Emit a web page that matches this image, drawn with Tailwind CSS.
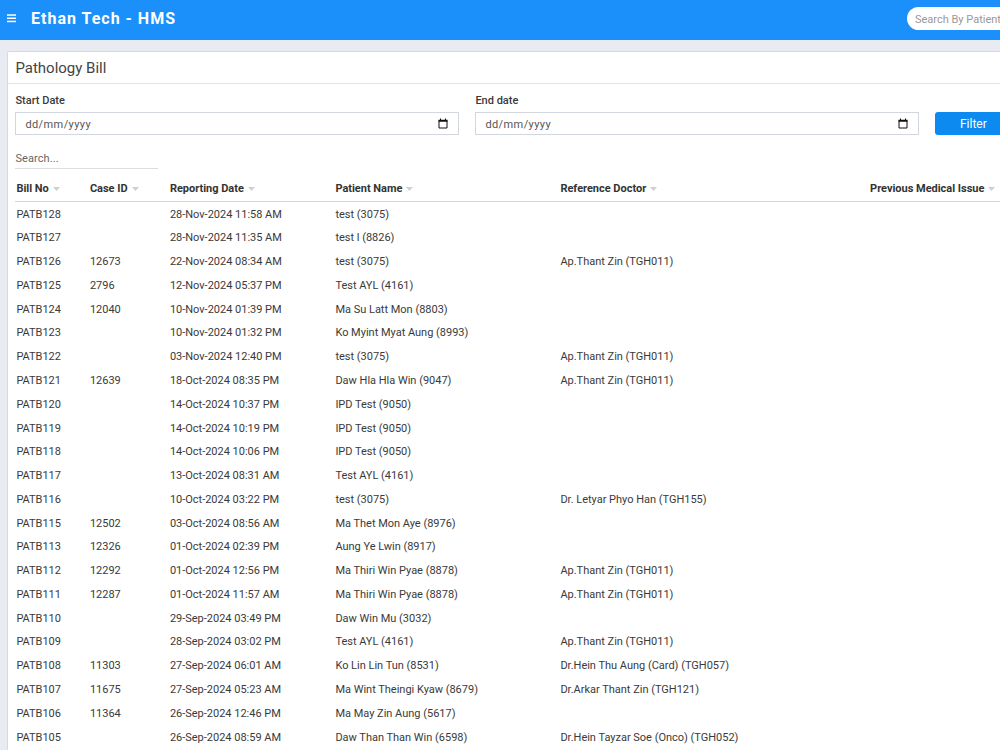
<!DOCTYPE html>
<html lang="en">
<head>
    <meta charset="UTF-8">
    <meta name="viewport" content="width=device-width, initial-scale=1.0">
    <title>Pathology Bill</title>
    <script src="https://cdn.jsdelivr.net/npm/@tailwindcss/browser@4"></script>
</head>
<body class="h-[750px] overflow-hidden bg-[#e8ebf1] font-['Roboto',sans-serif] text-[11px] leading-4 text-[#3a3a3a]">
    <header class="flex h-10 items-center justify-between bg-[#1b8ffa] pl-[7px] text-white">
        <div class="flex items-center gap-[15px] pb-[3px]">
            <svg class="h-[9px] w-[9px]" viewBox="0 0 9 9" fill="currentColor">
                <rect y="0.3" width="9" height="1.5" />
                <rect y="3.5" width="9" height="1.5" />
                <rect y="6.7" width="9" height="1.5" />
            </svg>
            <h1 class="text-[16px] font-bold leading-5 tracking-[1px]">Ethan Tech - HMS</h1>
        </div>
        <div class="mb-[3px] h-[23px] w-[93px] overflow-hidden whitespace-nowrap rounded-l-full bg-white pl-2 text-[11px] leading-[25px] text-[#999]">Search By Patient</div>
    </header>

    <main class="ml-[7px] mt-[11.4px] h-[720px] overflow-hidden rounded-tl-[2px] border-l border-t border-[#cfdde3] bg-white">
        <div class="h-8 border-b border-[#dce7eb] pl-[7.4px] text-[15px] leading-[33px] text-[#444]">Pathology Bill</div>

        <div class="flex pl-[7.4px] pt-[9px]">
            <div class="w-[444px] shrink-0">
                <label class="block font-medium">Start Date</label>
                <div class="mt-[3px] flex h-[23px] items-center justify-between border border-[#d2d6de] pl-[9px] pr-[10px] text-[#555]">
                    <span class="pt-[2px] tracking-[0.4px]">dd/mm/yyyy</span>
                    <svg class="h-[11px] w-[10px]" viewBox="0 0 10 11" fill="none" stroke="#111">
                        <path d="M1 2.5h8v7.5H1z" />
                        <path d="M.5 2.7h9" stroke-width="2" />
                        <path d="M2.5 .5v2M7.5 .5v2" />
                    </svg>
                </div>
            </div>
            <div class="ml-4 w-[444px] shrink-0">
                <label class="block font-medium">End date</label>
                <div class="mt-[3px] flex h-[23px] items-center justify-between border border-[#d2d6de] pl-[9px] pr-[10px] text-[#555]">
                    <span class="pt-[2px] tracking-[0.4px]">dd/mm/yyyy</span>
                    <svg class="h-[11px] w-[10px]" viewBox="0 0 10 11" fill="none" stroke="#111">
                        <path d="M1 2.5h8v7.5H1z" />
                        <path d="M.5 2.7h9" stroke-width="2" />
                        <path d="M2.5 .5v2M7.5 .5v2" />
                    </svg>
                </div>
            </div>
            <button class="ml-4 mt-[19px] h-[23px] w-[76px] shrink-0 rounded-[3px] bg-[#0c8af0] text-[12px] text-white">Filter</button>
        </div>

        <div class="ml-[7.4px] mt-[13px] h-[21px] w-[143px] border-b border-[#ddd] pt-[3px] tracking-[0.1px] text-[#666]">Search...</div>

        <div class="ml-[7.4px] grid h-[33px] grid-cols-[73.5px_80px_165.5px_225px_309.7px_1fr] items-center border-b border-[#d5d8da] pl-px pt-[7px] font-bold tracking-[-0.02px] text-[#333]" id="billHead"></div>
        <div class="ml-[7.4px] pl-px pt-[0.4px]" id="billRows"></div>
    </main>

    <script>
        const columns = ['Bill No', 'Case ID', 'Reporting Date', 'Patient Name', 'Reference Doctor', 'Previous Medical Issue'];

        // bill no, case id, reporting date, patient, doctor
        const bills = [
            ['PATB128', '', '28-Nov-2024 11:58 AM', 'test (3075)', ''],
            ['PATB127', '', '28-Nov-2024 11:35 AM', 'test l (8826)', ''],
            ['PATB126', '12673', '22-Nov-2024 08:34 AM', 'test (3075)', 'Ap.Thant Zin (TGH011)'],
            ['PATB125', '2796', '12-Nov-2024 05:37 PM', 'Test AYL (4161)', ''],
            ['PATB124', '12040', '10-Nov-2024 01:39 PM', 'Ma Su Latt Mon (8803)', ''],
            ['PATB123', '', '10-Nov-2024 01:32 PM', 'Ko Myint Myat Aung (8993)', ''],
            ['PATB122', '', '03-Nov-2024 12:40 PM', 'test (3075)', 'Ap.Thant Zin (TGH011)'],
            ['PATB121', '12639', '18-Oct-2024 08:35 PM', 'Daw Hla Hla Win (9047)', 'Ap.Thant Zin (TGH011)'],
            ['PATB120', '', '14-Oct-2024 10:37 PM', 'IPD Test (9050)', ''],
            ['PATB119', '', '14-Oct-2024 10:19 PM', 'IPD Test (9050)', ''],
            ['PATB118', '', '14-Oct-2024 10:06 PM', 'IPD Test (9050)', ''],
            ['PATB117', '', '13-Oct-2024 08:31 AM', 'Test AYL (4161)', ''],
            ['PATB116', '', '10-Oct-2024 03:22 PM', 'test (3075)', 'Dr. Letyar Phyo Han (TGH155)'],
            ['PATB115', '12502', '03-Oct-2024 08:56 AM', 'Ma Thet Mon Aye (8976)', ''],
            ['PATB113', '12326', '01-Oct-2024 02:39 PM', 'Aung Ye Lwin (8917)', ''],
            ['PATB112', '12292', '01-Oct-2024 12:56 PM', 'Ma Thiri Win Pyae (8878)', 'Ap.Thant Zin (TGH011)'],
            ['PATB111', '12287', '01-Oct-2024 11:57 AM', 'Ma Thiri Win Pyae (8878)', 'Ap.Thant Zin (TGH011)'],
            ['PATB110', '', '29-Sep-2024 03:49 PM', 'Daw Win Mu (3032)', ''],
            ['PATB109', '', '28-Sep-2024 03:02 PM', 'Test AYL (4161)', 'Ap.Thant Zin (TGH011)'],
            ['PATB108', '11303', '27-Sep-2024 06:01 AM', 'Ko Lin Lin Tun (8531)', 'Dr.Hein Thu Aung (Card) (TGH057)'],
            ['PATB107', '11675', '27-Sep-2024 05:23 AM', 'Ma Wint Theingi Kyaw (8679)', 'Dr.Arkar Thant Zin (TGH121)'],
            ['PATB106', '11364', '26-Sep-2024 12:46 PM', 'Ma May Zin Aung (5617)', ''],
            ['PATB105', '', '26-Sep-2024 08:59 AM', 'Daw Than Than Win (6598)', 'Dr.Hein Tayzar Soe (Onco) (TGH052)']
        ];

        document.getElementById('billHead').innerHTML = columns.map(name => `
            <div class="flex items-center gap-1 whitespace-nowrap">${name}
                <svg class="mt-px h-1 w-[7px]" viewBox="0 0 7 4" fill="#d0d0d0"><path d="M0 0h7L3.5 4z" /></svg>
            </div>`).join('');

        document.getElementById('billRows').innerHTML = bills.map(bill => `
            <div class="grid h-[23.77px] grid-cols-[73.5px_80px_165.5px_225px_309.7px_1fr] items-center whitespace-nowrap tracking-[-0.01px]">
                ${bill.map(cell => `<span>${cell}</span>`).join('')}
            </div>`).join('');
    </script>
</body>
</html>
